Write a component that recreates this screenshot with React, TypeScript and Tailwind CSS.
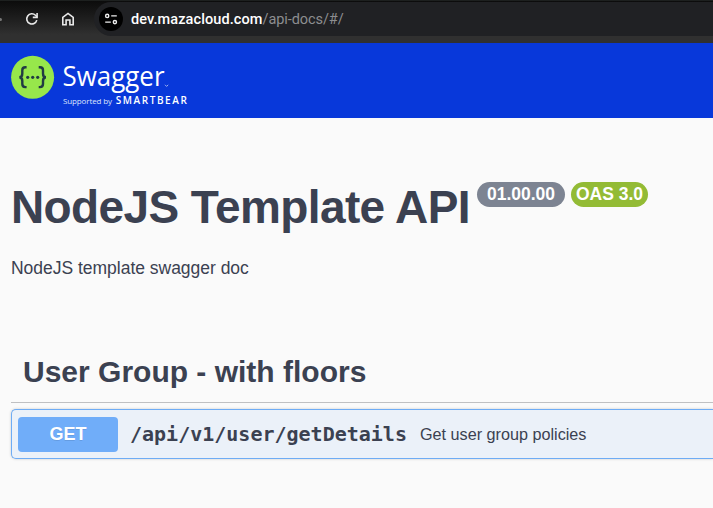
import React from "react";

function ReloadIcon() {
  return (
    <svg width="14" height="14" viewBox="0 0 14 14" fill="none" stroke="#e9e9e9" strokeWidth="1.6">
      <path d="M11.8 8.1A5.1 5.1 0 1 1 10.5 3.3L12 4.8" />
      <path d="M12.1 1v4.4H7.8" />
    </svg>
  );
}

function HomeIcon() {
  return (
    <svg width="14" height="14" viewBox="0 0 14 14" fill="none" stroke="#e9e9e9" strokeWidth="1.6">
      <path d="M1.8 5.3 7 1.4l5.2 3.9v7.4H8.9V8H5.1v4.7H1.8Z" />
    </svg>
  );
}

function SiteSettingsIcon() {
  return (
    <svg width="24" height="24" viewBox="0 0 24 24" fill="none" stroke="#ececec" strokeWidth="1.4">
      <circle cx="12" cy="12" r="12" fill="#000" stroke="none" />
      <circle cx="8.2" cy="8.9" r="1.6" />
      <path d="M12.2 8.9h5.6M6.2 15.1h5.6" />
      <circle cx="15.9" cy="15.1" r="1.6" />
    </svg>
  );
}

function BrowserBar() {
  return (
    <div className="flex h-[43px] items-start overflow-hidden border-t border-[#1d201f] bg-linear-to-b from-[#0c0c0c] to-[#303030] to-80%">
      <div className="mt-[17px] h-[3px] w-[2px] rounded-r-full bg-[#777]" />
      <div className="mt-[11px] ml-[23px]"><ReloadIcon /></div>
      <div className="mt-[11px] ml-[22px]"><HomeIcon /></div>
      <div className="mt-px ml-[19px] flex h-[34px] flex-1 items-center rounded-l-full bg-[#202124] pl-[5px]">
        <SiteSettingsIcon />
        <span className="ml-2 whitespace-nowrap pt-0.5 font-[Roboto,sans-serif] text-[14.5px] leading-5 tracking-[-0.08px] text-[#8d8e90]">
          <span className="font-medium tracking-[0.1px] text-white">dev.mazacloud.com</span>/api-docs/#/
        </span>
      </div>
    </div>
  );
}

function SwaggerLogo() {
  return (
    <svg width="180" height="56" viewBox="0 0 180 56" role="img" aria-label="Swagger">
      <circle cx="21.6" cy="22.3" r="21.5" fill="#97e74b" />
      <g fill="none" stroke="#213b43" strokeWidth="2.4">
        <path d="M15.6 12.3h-1.3c-2.2 0-3 1-3 3v3.1c0 2.4-.7 3.8-3 3.8 2.3 0 3 1.4 3 3.8v3.1c0 2 .8 3 3 3h1.3" />
        <path d="M27.7 12.3H29c2.2 0 3 1 3 3v3.1c0 2.4.7 3.8 3 3.8-2.3 0-3 1.4-3 3.8v3.1c0 2-.8 3-3 3h-1.3" />
      </g>
      <g fill="#213b43">
        <circle cx="16.7" cy="22.3" r="1.6" />
        <circle cx="21.7" cy="22.3" r="1.6" />
        <circle cx="26.7" cy="22.3" r="1.6" />
      </g>
      <text x="51.5" y="31" fill="#fff" fontSize="28" textLength="102" lengthAdjust="spacingAndGlyphs" className="font-[Open_Sans,sans-serif]">Swagger</text>
      <path d="m154 29.8 1.6 1.6 1.6-1.6" fill="none" stroke="#fff" strokeOpacity=".6" strokeWidth="1" />
      <text x="52" y="49" fill="#dce4fc" fontSize="8" textLength="49" className="font-[Open_Sans,sans-serif]">Supported by</text>
      <text x="104.8" y="49" fill="#fff" fontSize="10" fontWeight="600" textLength="71" className="font-[Open_Sans,sans-serif]">SMARTBEAR</text>
    </svg>
  );
}

export default function App() {
  return (
    <div className="h-[508px] w-[713px] overflow-hidden bg-[#fafafa] font-['Liberation_Sans',Arial,sans-serif] text-[#3b4151]">
      <BrowserBar />
      <header className="h-[75px] bg-[#0838da] pt-3 pl-[11px]">
        <SwaggerLogo />
      </header>
      <main className="pl-[11px]">
        <div className="flex items-start pt-16">
          <h1 className="-mt-px h-[53px] w-[466px] whitespace-nowrap text-[46px] leading-[52px] font-bold tracking-[-0.6px]">NodeJS Template API</h1>
          <span className="flex h-[25px] w-[88px] items-center justify-center rounded-full bg-[#7d8492] text-[17.5px] font-bold text-white">01.00.00</span>
          <span className="ml-1.5 flex h-[25px] w-[77px] items-center justify-center rounded-full bg-[#93bb35] text-[17.5px] font-bold whitespace-nowrap text-white">OAS 3.0</span>
        </div>
        <p className="mt-6 text-[17.5px] leading-5 tracking-[-0.02px]">NodeJS template swagger doc</p>
        <h2 className="mt-[74px] h-[51px] border-b border-[#bfc0c2] pl-3 text-[30px] leading-[40px] font-bold whitespace-nowrap">User Group - with floors</h2>
        <div className="mt-[6px] flex h-[50px] items-start rounded-l-[5px] border border-r-0 border-[#6eacf5] bg-[#ebf1f9] pt-[7px] pl-1.5 shadow-[0_0_3px_rgba(0,0,0,0.19)]">
          <span className="flex h-[35px] w-[100px] items-center justify-center rounded-[4px] bg-[#70adf9] text-[18px] font-bold text-white [text-shadow:0_1px_0_rgba(0,0,0,0.1)]">GET</span>
          <span className="ml-3 w-[290px] font-['DejaVu_Sans_Mono',monospace] text-[20px] leading-[35px] font-bold whitespace-nowrap">/api/v1/user/getDetails</span>
          <span className="text-[16.2px] leading-[35px] whitespace-nowrap">Get user group policies</span>
        </div>
      </main>
    </div>
  );
}
